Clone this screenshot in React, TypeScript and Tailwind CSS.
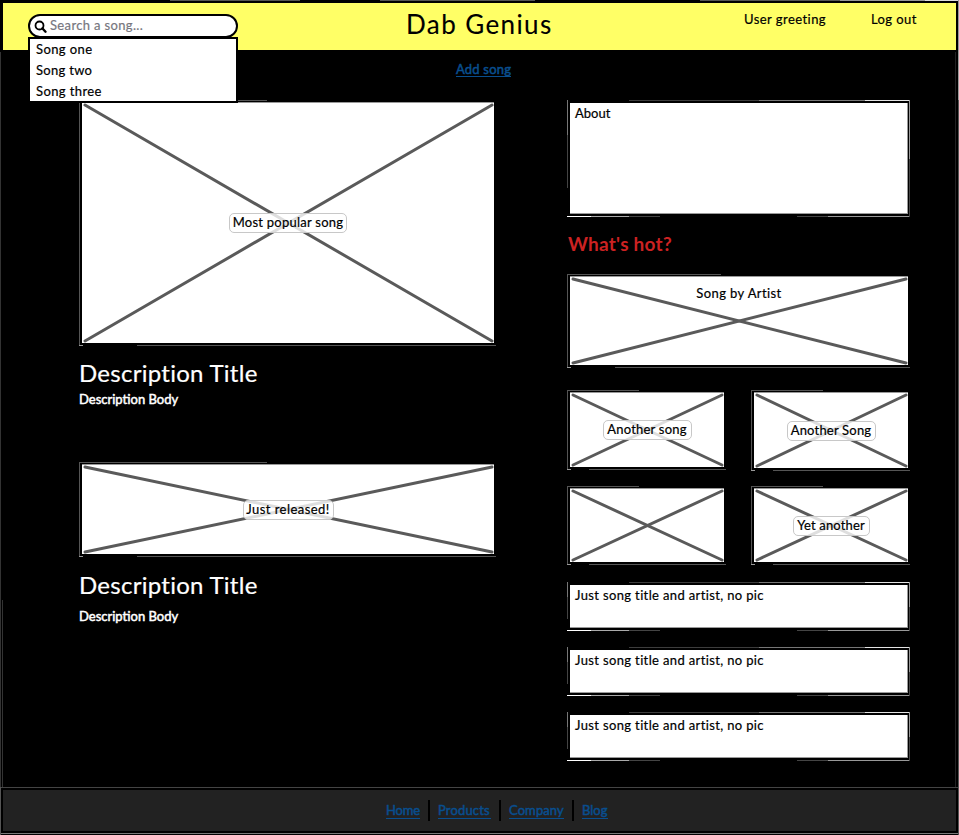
import type { ReactNode } from "react";

type Edge = [string, string, string, string, string];

const sketchEdges: Edge[] = [
  ["18%", "0.5", "56%", "0.5", "#3d3d3d"],
  ["56%", "0.5", "87%", "0.5", "#777"],
  ["87%", "0.5", "100%", "0.5", "#e4e4e4"],
  ["0.5", "0", "0.5", "30%", "#777"],
  ["0.5", "30%", "0.5", "75%", "#444"],
];

function Edges({ text = false }: { text?: boolean }) {
  return (
    <svg className="pointer-events-none absolute inset-0 h-full w-full" shapeRendering="crispEdges">
      {text ? (
        <>
          {sketchEdges.map(([x1, y1, x2, y2, c], i) => (
            <line key={i} x1={x1} y1={y1} x2={x2} y2={y2} stroke={c} />
          ))}
          <svg y="100%" className="overflow-visible">
            <line x1="0" y1="-0.5" x2="7%" y2="-0.5" stroke="#fff" />
            <line x1="7%" y1="-0.5" x2="18%" y2="-0.5" stroke="#aaa" />
            <line x1="18%" y1="-0.5" x2="27%" y2="-0.5" stroke="#444" />
            <line x1="67%" y1="-0.5" x2="76%" y2="-0.5" stroke="#444" />
            <line x1="76%" y1="-0.5" x2="100%" y2="-0.5" stroke="#999" />
          </svg>
          <svg x="100%" className="overflow-visible">
            <line x1="-0.5" y1="0" x2="-0.5" y2="50%" stroke="#999" />
            <line x1="-0.5" y1="50%" x2="-0.5" y2="100%" stroke="#444" />
          </svg>
        </>
      ) : (
        <>
          <line x1="0" y1="0.5" x2="45%" y2="0.5" stroke="#555" />
          <line x1="0.5" y1="0" x2="0.5" y2="100%" stroke="#555" />
          <svg y="100%" className="overflow-visible">
            <line x1="0" y1="-0.5" x2="4" y2="-0.5" stroke="#999" />
            <line x1="14%" y1="-0.5" x2="100%" y2="-0.5" stroke="#555" />
          </svg>
        </>
      )}
    </svg>
  );
}

function Picture({ className, children }: { className: string; children?: ReactNode }) {
  return (
    <div className={`relative flex shrink-0 bg-black pt-[2px] pr-[2px] pb-[3px] pl-[3px] ${className}`}>
      <Edges />
      <div className="relative flex flex-1 items-center justify-center border-t border-[#999] bg-white">
        <div className="absolute inset-x-[2.5px] bottom-[2px] top-[2px]">
          <svg className="block h-full w-full overflow-visible" stroke="#5a5a5a" strokeWidth="3" strokeLinecap="round">
            <line x1="0" y1="0" x2="100%" y2="100%" />
            <line x1="0" y1="100%" x2="100%" y2="0" />
          </svg>
        </div>
        {children}
      </div>
    </div>
  );
}

function Tag({ className, children }: { className: string; children: ReactNode }) {
  return (
    <span
      className={`relative flex h-5 items-center justify-center whitespace-nowrap rounded-[5px] border border-[#c8c8c8] bg-white/80 pb-[2px] ${className}`}
    >
      {children}
    </span>
  );
}

function TextBox({ className, children }: { className: string; children: ReactNode }) {
  return (
    <div className={`relative flex shrink-0 bg-black p-[3px] pr-[2px] ${className}`}>
      <Edges text />
      <div className="flex-1 border-b border-r border-[#999] bg-white pl-[5px] leading-5">{children}</div>
    </div>
  );
}

const songs = [
  { title: "Song one", spacing: "tracking-[0.4px]" },
  { title: "Song two", spacing: "tracking-[0.3px]" },
  { title: "Song three", spacing: "tracking-[0.4px]" },
];

export default function App() {
  return (
    <div className="relative flex h-[835px] w-[959px] flex-col overflow-hidden bg-black font-[Lato,'Open_Sans',sans-serif] text-[13px] leading-5 text-black [-webkit-text-stroke:0.2px]">
      <svg className="pointer-events-none absolute inset-0 z-20 h-full w-full" shapeRendering="crispEdges">
        <path d="M170 .5H300M380 .5H535M700 .5H840" stroke="#555" />
        <path d="M840 .5H925" stroke="#999" />
        <path d="M925 .5H959" stroke="#ddd" />
        <path d="M.5 52V787M2.5 600V787" stroke="#333" />
        <path d="M955.5 52V787" stroke="#222" />
        <path d="M958.5 0V100" stroke="#999" />
        <path d="M958.5 100V835M.5 787V835" stroke="#555" />
      </svg>
      <header className="relative flex h-[50px] shrink-0 border-x-[3px] border-t-[3px] border-black bg-[#ffff66]">
        <div className="ml-[25px] mt-[11px] flex h-6 w-[210px] items-center rounded-full border-2 border-black bg-white pl-1">
          <svg width="13" height="13" viewBox="0 0 13 13" fill="none" stroke="#000" strokeLinecap="round">
            <circle cx="5.5" cy="5.5" r="4" strokeWidth="1.8" />
            <path d="M8.5 8.5 11.5 11.7" strokeWidth="2.4" />
          </svg>
          <span className="-mt-[2px] ml-[3px] text-[#777780] tracking-[0.35px]">Search a song...</span>
        </div>
        <h1 className="ml-[168px] mt-[3px] w-[200px] whitespace-nowrap text-[26px] leading-9 tracking-[1.4px] [-webkit-text-stroke:0.1px]">
          Dab Genius
        </h1>
        <span className="ml-[138px] mt-[6px] w-[127px] tracking-[0.45px]">User greeting</span>
        <span className="mt-[6px] whitespace-nowrap tracking-[0.4px]">Log out</span>
        <ul className="absolute left-[25px] top-[34px] z-10 h-[66px] w-[210px] border-2 border-black bg-white pl-[6px]">
          {songs.map((s) => (
            <li key={s.title} className={`h-[21px] leading-5 ${s.spacing}`}>
              {s.title}
            </li>
          ))}
        </ul>
      </header>

      <div className="flex h-[50px] shrink-0 pl-[456px] pt-[10px]">
        <a className="h-[17px] border-b border-[#094e8e] leading-[18px] text-[#094e8e] tracking-[0.2px] [-webkit-text-stroke:0.5px]">
          Add song
        </a>
      </div>

      <main className="flex h-[687px] shrink-0 pl-[79px]">
        <section className="flex w-[488px] flex-col text-white">
          <Picture className="h-[246px] w-[417px] text-black">
            <Tag className="w-[118px] tracking-[0.25px]">Most popular song</Tag>
          </Picture>
          <h2 className="mt-[9px] h-9 text-[24px] leading-9 tracking-[0.27px]">Description Title</h2>
          <p className="mt-[-2px] tracking-[0px] [-webkit-text-stroke:0.5px]">Description Body</p>
          <Picture className="mt-[53px] h-[95px] w-[417px] text-black">
            <Tag className="w-[91px] tracking-[0.45px]">Just released!</Tag>
          </Picture>
          <h2 className="mt-[10px] h-9 text-[24px] leading-9 tracking-[0.27px]">Description Title</h2>
          <p className="mt-[3px] tracking-[0px] [-webkit-text-stroke:0.5px]">Description Body</p>
        </section>

        <section className="flex w-[343px] flex-col">
          <TextBox className="h-[117px] tracking-[0px]">About</TextBox>
          <h2 className="ml-px mt-[13px] h-7 text-[19px] font-bold leading-7 tracking-[0.25px] text-[#cc2222] [-webkit-text-stroke:0px]">
            What's hot?
          </h2>
          <Picture className="mt-[16px] h-[94px]">
            <span className="relative mb-[57px] tracking-[0.4px]">Song by Artist</span>
          </Picture>
          <div className="mt-[22px] flex justify-between">
            <Picture className="h-[80px] w-[159px]">
              <Tag className="w-[89px] tracking-[0.2px]">Another song</Tag>
            </Picture>
            <Picture className="h-[81px] w-[159px]">
              <Tag className="w-[89px] tracking-[0.2px]">Another Song</Tag>
            </Picture>
          </div>
          <div className="mt-[15px] flex justify-between">
            <Picture className="h-[79px] w-[159px]" />
            <Picture className="h-[79px] w-[159px]">
              <Tag className="w-[77px] tracking-[0.15px]">Yet another</Tag>
            </Picture>
          </div>
          <div className="mt-[17px] flex flex-col gap-4 tracking-[0.36px]">
            <TextBox className="h-[49px]">Just song title and artist, no pic</TextBox>
            <TextBox className="h-[49px]">Just song title and artist, no pic</TextBox>
            <TextBox className="h-[49px]">Just song title and artist, no pic</TextBox>
          </div>
        </section>
      </main>

      <footer className="flex h-[48px] shrink-0 flex-col">
        <div className="h-px bg-[#444]" />
        <nav className="flex h-[45px] items-center border-x-[3px] border-y-2 border-black bg-[#222] pl-[383px] text-[#094e8e] [-webkit-text-stroke:0.5px]">
          <a className="h-[17px] w-[34px] whitespace-nowrap border-b border-current leading-4 tracking-[-0.2px]">Home</a>
          <i className="mx-2 h-[21px] w-[2px] bg-black" />
          <a className="h-[17px] w-[53px] whitespace-nowrap border-b border-current leading-4 tracking-[0.15px]">Products</a>
          <i className="mx-2 h-[21px] w-[2px] bg-black" />
          <a className="h-[17px] w-[55px] whitespace-nowrap border-b border-current leading-4 tracking-[0.1px]">Company</a>
          <i className="mx-2 h-[21px] w-[2px] bg-black" />
          <a className="h-[17px] w-[26px] whitespace-nowrap border-b border-current leading-4">Blog</a>
        </nav>
        <div className="h-px bg-[#777]" />
      </footer>
    </div>
  );
}
